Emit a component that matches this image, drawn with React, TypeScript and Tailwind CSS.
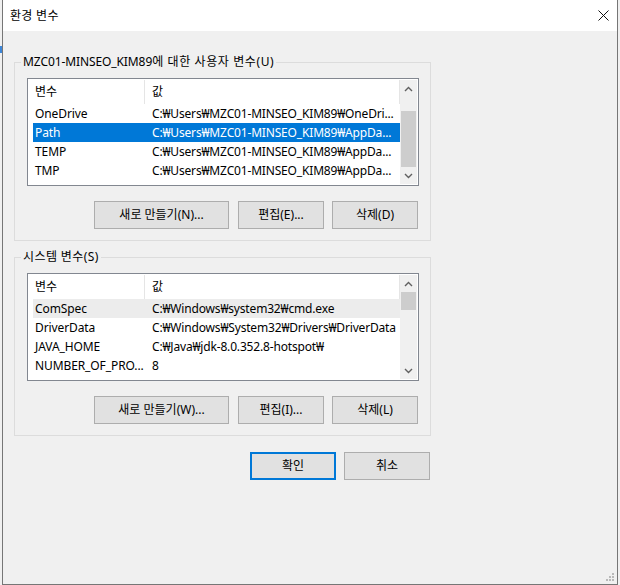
import React from "react";

const FONT = "font-['Noto_Sans','Noto_Sans_CJK_KR',sans-serif]";

function Chevron({ up }: { up: boolean }) {
  return (
    <svg width="9" height="6" viewBox="0 0 9 6">
      <path
        d={up ? "M1 5 L4.5 1.5 L8 5" : "M1 1 L4.5 4.5 L8 1"}
        fill="none"
        stroke="#606060"
        strokeWidth="1.4"
      />
    </svg>
  );
}

function ScrollBar({ thumbTop, thumbH }: { thumbTop: number; thumbH: number }) {
  return (
    <div className="w-[17px] h-full flex flex-col bg-[#f0f0f0] shrink-0">
      <div className="h-[17px] flex items-center justify-center shrink-0">
        <Chevron up />
      </div>
      <div className="flex-1 flex flex-col">
        <div style={{ height: thumbTop }} />
        <div className="mx-[1px] bg-[#cdcdcd]" style={{ height: thumbH }} />
      </div>
      <div className="h-[17px] flex items-center justify-center shrink-0">
        <Chevron up={false} />
      </div>
    </div>
  );
}

type Row = { name: string; value: string };

function VarList({
  rows,
  selected,
  hovered,
  thumbTop,
  thumbH,
}: {
  rows: Row[];
  selected?: number;
  hovered?: number;
  thumbTop: number;
  thumbH: number;
}) {
  return (
    <div className="w-[392px] h-[108px] border border-[#828790] bg-white p-[1px] flex">
      <div className="w-[371px] h-full flex flex-col overflow-hidden">
        <div className="h-[24px] flex shrink-0">
          <div className="w-[116px] pl-[6px] flex items-center border-r border-[#e5e5e5]">변수</div>
          <div className="flex-1 pl-[7px] flex items-center border-r border-[#e5e5e5]">값</div>
        </div>
        {rows.map((r, i) => {
          const sel = i === selected;
          const hov = i === hovered;
          return (
            <div
              key={i}
              className={
                "ml-[4px] h-[19px] shrink-0 flex items-center whitespace-nowrap " +
                (sel ? "bg-[#0078d7] text-white" : hov ? "bg-[#ececec]" : "")
              }
            >
              <div className="w-[111px] pl-[2px] tracking-[-0.1px]">{r.name}</div>
              <div className="flex-1 pl-[8px] tracking-[-0.17px]">{r.value}</div>
            </div>
          );
        })}
      </div>
      <ScrollBar thumbTop={thumbTop} thumbH={thumbH} />
    </div>
  );
}

function Btn({ children, w, primary }: { children: React.ReactNode; w: string; primary?: boolean }) {
  return (
    <div
      className={
        w +
        " h-[28px] flex items-center justify-center bg-[#e1e1e1] " +
        (primary ? "border-2 border-[#0078d7]" : "border border-[#adadad]")
      }
    >
      {children}
    </div>
  );
}

function Group({
  label,
  children,
  className,
}: {
  label: React.ReactNode;
  children: React.ReactNode;
  className?: string;
}) {
  return (
    <div className={"relative w-[417px] h-[179px] border border-[#dcdcdc] pt-[15px] pl-[12px] pr-[11px] " + (className ?? "")}>
      <div className="absolute -top-[9px] left-[6px] px-[2px] bg-[#f0f0f0] leading-[16px] whitespace-nowrap">
        {label}
      </div>
      {children}
    </div>
  );
}

export default function App() {
  const userRows: Row[] = [
    { name: "OneDrive", value: "C:₩Users₩MZC01-MINSEO_KIM89₩OneDri..." },
    { name: "Path", value: "C:₩Users₩MZC01-MINSEO_KIM89₩AppDa..." },
    { name: "TEMP", value: "C:₩Users₩MZC01-MINSEO_KIM89₩AppDa..." },
    { name: "TMP", value: "C:₩Users₩MZC01-MINSEO_KIM89₩AppDa..." },
  ];
  const sysRows: Row[] = [
    { name: "ComSpec", value: "C:₩Windows₩system32₩cmd.exe" },
    { name: "DriverData", value: "C:₩Windows₩System32₩Drivers₩DriverData" },
    { name: "JAVA_HOME", value: "C:₩Java₩jdk-8.0.352.8-hotspot₩" },
    { name: "NUMBER_OF_PRO...", value: "8" },
  ];

  return (
    <div className={"w-[620px] h-[585px] bg-[#f0f0f0] flex text-[12px] text-black " + FONT}>
      <div className="w-[2px] shrink-0 flex flex-col">
        <div className="mt-[46px] h-[7px] w-[2px] bg-[#3d86d8]" />
      </div>
      <div className="relative w-[616px] h-[585px] border-l border-r border-b border-[#767676] bg-[#f0f0f0] flex flex-col">
        <div className="h-[31px] bg-white flex items-center justify-between pl-[7px] pr-[8px] shrink-0">
          <span className="text-[12px] tracking-[0.3px]">환경 변수</span>
          <svg width="11" height="11" viewBox="0 0 11 11">
            <path d="M0.5 0.5 L10.5 10.5 M10.5 0.5 L0.5 10.5" stroke="#111" strokeWidth="1" />
          </svg>
        </div>

        <div className="ml-[11px] mt-[31px] flex flex-col">
          <Group
            label={
              <span>
                <span className="tracking-[-0.1px]">MZC01-MINSEO_KIM89</span>
                <span className="tracking-[0.6px]">에 대한 사용자 변수(U)</span>
              </span>
            }
          >
            <VarList rows={userRows} selected={1} thumbTop={14} thumbH={56} />
            <div className="mt-[15px] flex justify-end pr-[1px]">
              <Btn w="w-[135px]">새로 만들기(N)...</Btn>
              <div className="ml-[9px]">
                <Btn w="w-[86px]">편집(E)...</Btn>
              </div>
              <div className="ml-[8px]">
                <Btn w="w-[86px]">삭제(D)</Btn>
              </div>
            </div>
          </Group>

          <Group label={<span className="tracking-[0.4px]">시스템 변수(S)</span>} className="mt-[16px]">
            <VarList rows={sysRows} hovered={0} thumbTop={0} thumbH={18} />
            <div className="mt-[15px] flex justify-end pr-[1px]">
              <Btn w="w-[135px]">새로 만들기(W)...</Btn>
              <div className="ml-[9px]">
                <Btn w="w-[86px]">편집(I)...</Btn>
              </div>
              <div className="ml-[8px]">
                <Btn w="w-[86px]">삭제(L)</Btn>
              </div>
            </div>
          </Group>

          <div className="w-[417px] mt-[16px] flex justify-end pr-[1px] gap-[8px]">
            <Btn w="w-[86px]" primary>
              확인
            </Btn>
            <Btn w="w-[86px]">취소</Btn>
          </div>
        </div>

        <svg className="absolute right-[2px] bottom-[2px]" width="10" height="10" viewBox="0 0 10 10">
          <rect x="7" y="1" width="2" height="2" fill="#b9b9b9" />
          <rect x="4" y="4" width="2" height="2" fill="#b9b9b9" />
          <rect x="7" y="4" width="2" height="2" fill="#b9b9b9" />
          <rect x="1" y="7" width="2" height="2" fill="#b9b9b9" />
          <rect x="4" y="7" width="2" height="2" fill="#b9b9b9" />
          <rect x="7" y="7" width="2" height="2" fill="#b9b9b9" />
        </svg>
      </div>
    </div>
  );
}
